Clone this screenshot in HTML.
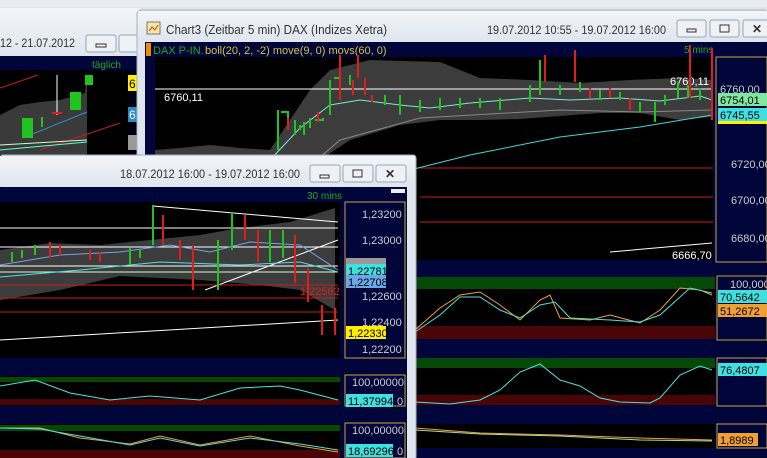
<!DOCTYPE html>
<html><head><meta charset="utf-8"><style>
html,body{margin:0;padding:0;background:#dde4ec;}
svg{display:block;font-family:"Liberation Sans",sans-serif;}
</style></head><body>
<svg width="767" height="458" viewBox="0 0 767 458" xmlns="http://www.w3.org/2000/svg">
<defs>
<linearGradient id="tb" x1="0" y1="0" x2="0" y2="1"><stop offset="0" stop-color="#f2f5f8"/><stop offset="1" stop-color="#dfe6ee"/></linearGradient>
</defs>
<rect width="767" height="458" fill="#dde4ec"/>
<rect x="0" y="0" width="767" height="7" fill="#e8ecf1"/>
<!-- left back window -->
<rect x="0" y="8" width="140" height="48" fill="url(#tb)"/>
<text x="0" y="47" font-size="12" fill="#333" textLength="75" lengthAdjust="spacingAndGlyphs">12 - 21.07.2012</text>
<rect x="86" y="35" width="30" height="17" rx="2" fill="#eef1f5" stroke="#9aa5b2"/>
<rect x="96" y="44" width="10" height="3" fill="none" stroke="#333"/>
<rect x="119" y="35" width="22" height="17" rx="2" fill="#eef1f5" stroke="#9aa5b2"/>
<rect x="0" y="56" width="140" height="104" fill="#00063a"/>
<rect x="0" y="70" width="128" height="88" fill="#000"/>
<text x="92" y="68" font-size="10" fill="#1fa81f">täglich</text>
<polygon points="0,115 20,105 40,102 60,100 85,93 87,70 87,155 0,155" fill="#3a3a3a"/>
<line x1="0" y1="88" x2="38" y2="75" stroke="#c81e1e"/>
<line x1="40" y1="150" x2="120" y2="123" stroke="#c81e1e"/>
<line x1="30" y1="135" x2="87" y2="112" stroke="#3a8acc"/>
<line x1="0" y1="150" x2="87" y2="142" stroke="#5fd" />
<line x1="0" y1="145" x2="87" y2="140" stroke="#cfc"/>
<rect x="22" y="118" width="11" height="20" fill="#1fc41f"/>
<rect x="70" y="92" width="11" height="18" fill="#1fc41f"/>
<rect x="85" y="75" width="8" height="10" fill="#1fc41f"/>
<line x1="57" y1="75" x2="57" y2="115" stroke="#fff"/>
<line x1="52" y1="113" x2="62" y2="113" stroke="#e01e1e" stroke-width="2"/>
<line x1="42" y1="117" x2="42" y2="127" stroke="#1fc41f" stroke-width="2"/>
<rect x="128" y="70" width="9" height="90" fill="#001"/>
<rect x="128" y="75" width="9" height="16" fill="#ffee00"/>
<rect x="128" y="107" width="9" height="15" fill="#2a8ac8"/>
<rect x="128" y="135" width="9" height="15" fill="#999"/>
<text x="129" y="88" font-size="12" fill="#000">6</text>
<text x="129" y="119" font-size="12" fill="#fff">6</text>
<!-- Chart3 window -->
<rect x="137" y="10" width="630" height="450" rx="4" fill="#dfe6ee" stroke="#a7b3c1"/>
<rect x="138" y="11" width="629" height="30" fill="url(#tb)"/>
<rect x="147" y="22" width="13" height="12" fill="#f6e8a0" stroke="#777"/>
<polyline points="149,31 152,27 155,30 158,25" fill="none" stroke="#c33"/>
<text x="166" y="34" font-size="13" fill="#333" textLength="221" lengthAdjust="spacingAndGlyphs">Chart3 (Zeitbar 5 min)  DAX (Indizes Xetra)</text>
<text x="487" y="34" font-size="12" fill="#333" textLength="179" lengthAdjust="spacingAndGlyphs">19.07.2012 10:55 - 19.07.2012 16:00</text>
<rect x="677" y="20" width="29" height="17" rx="2" fill="#eef1f5" stroke="#9aa5b2"/>
<rect x="687" y="29" width="9" height="3" fill="none" stroke="#333"/>
<rect x="710" y="20" width="29" height="17" rx="2" fill="#eef1f5" stroke="#9aa5b2"/>
<rect x="720" y="25" width="9" height="7" fill="none" stroke="#333"/>
<rect x="743" y="20" width="29" height="17" rx="2" fill="#eef1f5" stroke="#9aa5b2"/>
<text x="752" y="33" font-size="12" fill="#333" font-weight="bold">✕</text>
<rect x="145" y="42" width="622" height="416" fill="#00063a"/>
<rect x="146" y="43" width="5" height="13" fill="#f08c00"/>
<text x="153" y="54" font-size="11" fill="#1fa81f">DAX P-IN.</text>
<text x="205" y="54" font-size="11" fill="#d8c23a">boll(20, 2, -2) move(9, 0) movs(60, 0)</text>
<text x="684" y="53" font-size="10" fill="#1fa81f">5 mins</text>
<rect x="155" y="57" width="558" height="203" fill="#000"/>
<polygon points="155,150 180,148 210,145 240,148 270,150 290,120 310,90 330,70 370,60 440,62 480,78 530,80 580,83 630,80 680,78 712,80 712,117 680,120 640,113 600,113 560,116 520,119 480,120 440,120 400,125 350,140 320,160 300,180 280,210 270,260 155,260" fill="#3c3c3c"/>
<line x1="155" y1="89" x2="713" y2="89" stroke="#fff"/>
<text x="164" y="101" font-size="11" fill="#fff">6760,11</text>
<text x="670" y="85" font-size="11" fill="#fff">6760,11</text>
<line x1="420" y1="168" x2="713" y2="168" stroke="#c81e1e"/>
<line x1="420" y1="197" x2="713" y2="197" stroke="#c81e1e"/>
<line x1="420" y1="222" x2="713" y2="222" stroke="#c81e1e"/>
<polyline points="270,160 300,128 330,105 360,100 400,105 430,108 470,103 530,98 570,100 620,98 660,101 700,96 712,100" fill="none" stroke="#7fe8d0"/>
<polyline points="270,200 340,140 420,118 560,110 640,112 712,110" fill="none" stroke="#888"/>
<polyline points="410,170 470,155 560,137 640,127 712,115" fill="none" stroke="#3fd8d8"/>
<polyline points="610,252 712,243" fill="none" stroke="#fff"/>
<text x="672" y="259" font-size="11" fill="#fff">6666,70</text>
<g stroke-width="2" fill="none">
<path d="M278,110V150 M281,112H288V125 M295,120V135 M300,125V130 M304,122V135 M310,118V128 M315,120H323V118 M330,80V115 M334,78H340V97 M350,75V85" stroke="#1fc41f"/>
<path d="M340,55V100 M353,80V95 M358,55V78 M365,78V95 M372,95V102 M288,118V130 M318,112V122" stroke="#e01e1e"/>
<path d="M385,95V105 M400,95V115 M420,100V112 M440,98V110 M460,98V108 M480,98V108 M500,98V110 M530,85V102 M540,60V95 M560,85V95 M580,82V92 M600,90V100 M620,92V100 M640,102V112 M655,102V122 M665,95V105 M678,82V98 M688,85V98 M700,88V100" stroke="#1fc41f"/>
<path d="M545,55V82 M575,50V82 M590,88V98 M610,88V98 M630,98V110 M690,45V98 M712,48V120" stroke="#e01e1e"/>
</g>
<rect x="716" y="57" width="51" height="205" fill="#00063a" stroke="#c8a040"/>
<text x="720" y="93" font-size="11" fill="#ccc">6760,00</text>
<rect x="718" y="93" width="49" height="13" fill="#7fe8a0"/>
<text x="720" y="104" font-size="11" fill="#000">6754,01</text>
<rect x="718" y="118" width="49" height="6" fill="#ffee00"/>
<rect x="718" y="108" width="49" height="13" fill="#3fe0e0"/>
<text x="720" y="119" font-size="11" fill="#000">6745,55</text>
<text x="731" y="168" font-size="11" fill="#ccc">6720,00</text>
<text x="731" y="204" font-size="11" fill="#ccc">6700,00</text>
<text x="731" y="242" font-size="11" fill="#ccc">6680,00</text>
<!-- right oscillators -->
<rect x="415" y="277" width="300" height="62" fill="#000"/>
<rect x="415" y="277" width="300" height="12" fill="#064806"/>
<rect x="415" y="326" width="300" height="13" fill="#4a0606"/>
<polyline points="415,330 440,308 460,295 480,292 500,305 520,320 540,300 550,295 560,318 590,320 610,315 640,323 660,310 680,288 700,290 712,295" fill="none" stroke="#f0a030"/>
<polyline points="415,332 440,315 460,297 480,297 500,310 520,318 540,305 555,302 570,318 610,320 640,322 660,315 690,288 712,293" fill="none" stroke="#4fe0e0"/>
<rect x="717" y="276" width="50" height="64" fill="#00063a" stroke="#c8a040"/>
<text x="730" y="288" font-size="11" fill="#ccc">100,0000</text>
<rect x="718" y="290" width="49" height="13" fill="#3fe0e0"/><text x="720" y="301" font-size="11" fill="#000">70,5642</text>
<rect x="718" y="304" width="49" height="13" fill="#f0a030"/><text x="720" y="315" font-size="11" fill="#000">51,2672</text>
<rect x="415" y="358" width="300" height="47" fill="#000"/>
<rect x="415" y="358" width="300" height="10" fill="#064806"/>
<rect x="415" y="395" width="300" height="10" fill="#4a0606"/>
<polyline points="415,402 450,404 480,400 500,390 520,372 540,364 560,380 580,386 600,398 620,402 650,403 660,398 680,375 700,366 712,370" fill="none" stroke="#4fe0e0"/>
<rect x="717" y="358" width="50" height="48" fill="#00063a" stroke="#c8a040"/>
<rect x="718" y="363" width="49" height="13" fill="#3fe0e0"/><text x="720" y="374" font-size="11" fill="#000">76,4807</text>
<rect x="415" y="424" width="300" height="24" fill="#000"/>
<polyline points="415,428 480,433 560,435 640,438 712,440" fill="none" stroke="#f0a030"/>
<polyline points="415,430 480,434 560,436 640,440 712,441" fill="none" stroke="#9fe0a0"/>
<rect x="717" y="424" width="50" height="24" fill="#00063a" stroke="#c8a040"/>
<rect x="718" y="433" width="40" height="13" fill="#f0a030"/><text x="720" y="444" font-size="11" fill="#000">1,8989</text>
<!-- front window -->
<rect x="0" y="155" width="416" height="305" rx="3" fill="#dfe6ee" stroke="#a7b3c1"/>
<rect x="0" y="156" width="415" height="30" fill="url(#tb)"/>
<text x="120" y="178" font-size="12" fill="#333" textLength="180" lengthAdjust="spacingAndGlyphs">18.07.2012 16:00 - 19.07.2012 16:00</text>
<rect x="310" y="165" width="30" height="17" rx="2" fill="#eef1f5" stroke="#9aa5b2"/>
<rect x="320" y="175" width="9" height="3" fill="none" stroke="#333"/>
<rect x="343" y="165" width="30" height="17" rx="2" fill="#eef1f5" stroke="#9aa5b2"/>
<rect x="353" y="170" width="9" height="7" fill="none" stroke="#333"/>
<rect x="376" y="165" width="30" height="17" rx="2" fill="#eef1f5" stroke="#9aa5b2"/>
<text x="385" y="178" font-size="12" fill="#333" font-weight="bold">✕</text>
<rect x="0" y="187" width="407" height="271" fill="#00063a"/>
<text x="307" y="199" font-size="10" fill="#1fa81f">30 mins</text>
<rect x="391" y="189" width="14" height="4" fill="#eee"/>
<rect x="0" y="202" width="340" height="156" fill="#000"/>
<polygon points="0,250 50,243 100,245 150,240 200,235 240,228 290,222 335,208 335,310 300,290 260,285 200,280 120,276 60,290 0,300" fill="#3c3c3c"/>
<line x1="0" y1="228" x2="338" y2="228" stroke="#fff"/>
<line x1="0" y1="247" x2="338" y2="247" stroke="#fff"/>
<line x1="0" y1="266" x2="338" y2="266" stroke="#fff"/>
<line x1="153" y1="206" x2="338" y2="222" stroke="#fff"/>
<line x1="205" y1="290" x2="338" y2="240" stroke="#fff"/>
<line x1="0" y1="340" x2="338" y2="320" stroke="#fff"/>
<line x1="0" y1="272" x2="338" y2="272" stroke="#cfc"/>
<line x1="0" y1="285" x2="338" y2="285" stroke="#c81e1e"/>
<line x1="0" y1="298" x2="338" y2="298" stroke="#c81e1e"/>
<line x1="0" y1="312" x2="338" y2="312" stroke="#c81e1e"/>
<polyline points="0,265 60,255 120,252 170,245 210,252 250,242 300,245 338,270" fill="none" stroke="#6aa8e8"/>
<polyline points="0,277 80,270 160,262 240,265 300,262 338,272" fill="none" stroke="#4fe0e0"/>
<g stroke-width="2" fill="none">
<path d="M12,252V262 M22,250V258 M35,245V255 M130,248V265 M140,250V258 M153,205V245 M218,240V290 M232,212V250 M245,215V240 M270,230V262 M283,230V258" stroke="#1fc41f"/>
<path d="M50,242V258 M60,245V255 M90,250V260 M100,252V262 M163,215V245 M180,240V260 M193,245V290 M245,215V240 M258,230V262 M295,235V283 M308,268V302 M322,305V335 M335,308V335" stroke="#e01e1e"/>
</g>
<text x="300" y="295" font-size="11" fill="#e01e1e">1,22562</text>
<rect x="345" y="202" width="60" height="156" fill="#00063a" stroke="#c8a040"/>
<text x="362" y="218" font-size="11" fill="#ccc">1,23200</text>
<text x="362" y="244" font-size="11" fill="#ccc">1,23000</text>
<rect x="346" y="258" width="40" height="9" fill="#999"/>
<rect x="346" y="264" width="40" height="13" fill="#3fe0e0"/><text x="348" y="275" font-size="11" fill="#000">1,22781</text>
<rect x="346" y="275" width="40" height="13" fill="#6aa8e8"/><text x="348" y="286" font-size="11" fill="#000">1,22708</text>
<text x="362" y="300" font-size="11" fill="#ccc">1,22600</text>
<text x="362" y="326" font-size="11" fill="#ccc">1,22400</text>
<rect x="346" y="326" width="40" height="13" fill="#ffee00"/><text x="348" y="337" font-size="11" fill="#000">1,22330</text>
<text x="362" y="353" font-size="11" fill="#ccc">1,22200</text>
<rect x="0" y="376" width="340" height="30" fill="#000"/>
<rect x="0" y="377" width="340" height="5" fill="#064806"/>
<rect x="0" y="399" width="340" height="6" fill="#4a0606"/>
<polyline points="0,386 35,380 70,393 110,400 150,396 200,400 240,388 280,386 300,390 338,400" fill="none" stroke="#4fe0e0"/>
<rect x="345" y="375" width="60" height="31" fill="#00063a" stroke="#c8a040"/>
<text x="352" y="386" font-size="11" fill="#ccc">100,00000</text>
<rect x="346" y="394" width="47" height="13" fill="#3fe0e0"/><text x="348" y="405" font-size="11" fill="#000">11,37994</text>
<text x="397" y="405" font-size="11" fill="#ccc">0</text>
<rect x="0" y="424" width="340" height="34" fill="#000"/>
<rect x="0" y="425" width="340" height="6" fill="#064806"/>
<rect x="0" y="450" width="340" height="8" fill="#4a0606"/>
<polyline points="0,428 40,428 80,438 130,444 160,436 200,445 250,436 300,446 338,452" fill="none" stroke="#f0a030"/>
<polyline points="0,428 40,429 80,436 130,445 160,438 200,446 250,438 300,444 338,450" fill="none" stroke="#4fe0e0"/>
<rect x="345" y="423" width="60" height="35" fill="#00063a" stroke="#c8a040"/>
<text x="352" y="434" font-size="11" fill="#ccc">100,00000</text>
<rect x="346" y="444" width="47" height="13" fill="#3fe0e0"/><text x="348" y="455" font-size="11" fill="#000">18,69296</text>
<text x="397" y="455" font-size="11" fill="#ccc">0</text>
</svg>
</body></html>
